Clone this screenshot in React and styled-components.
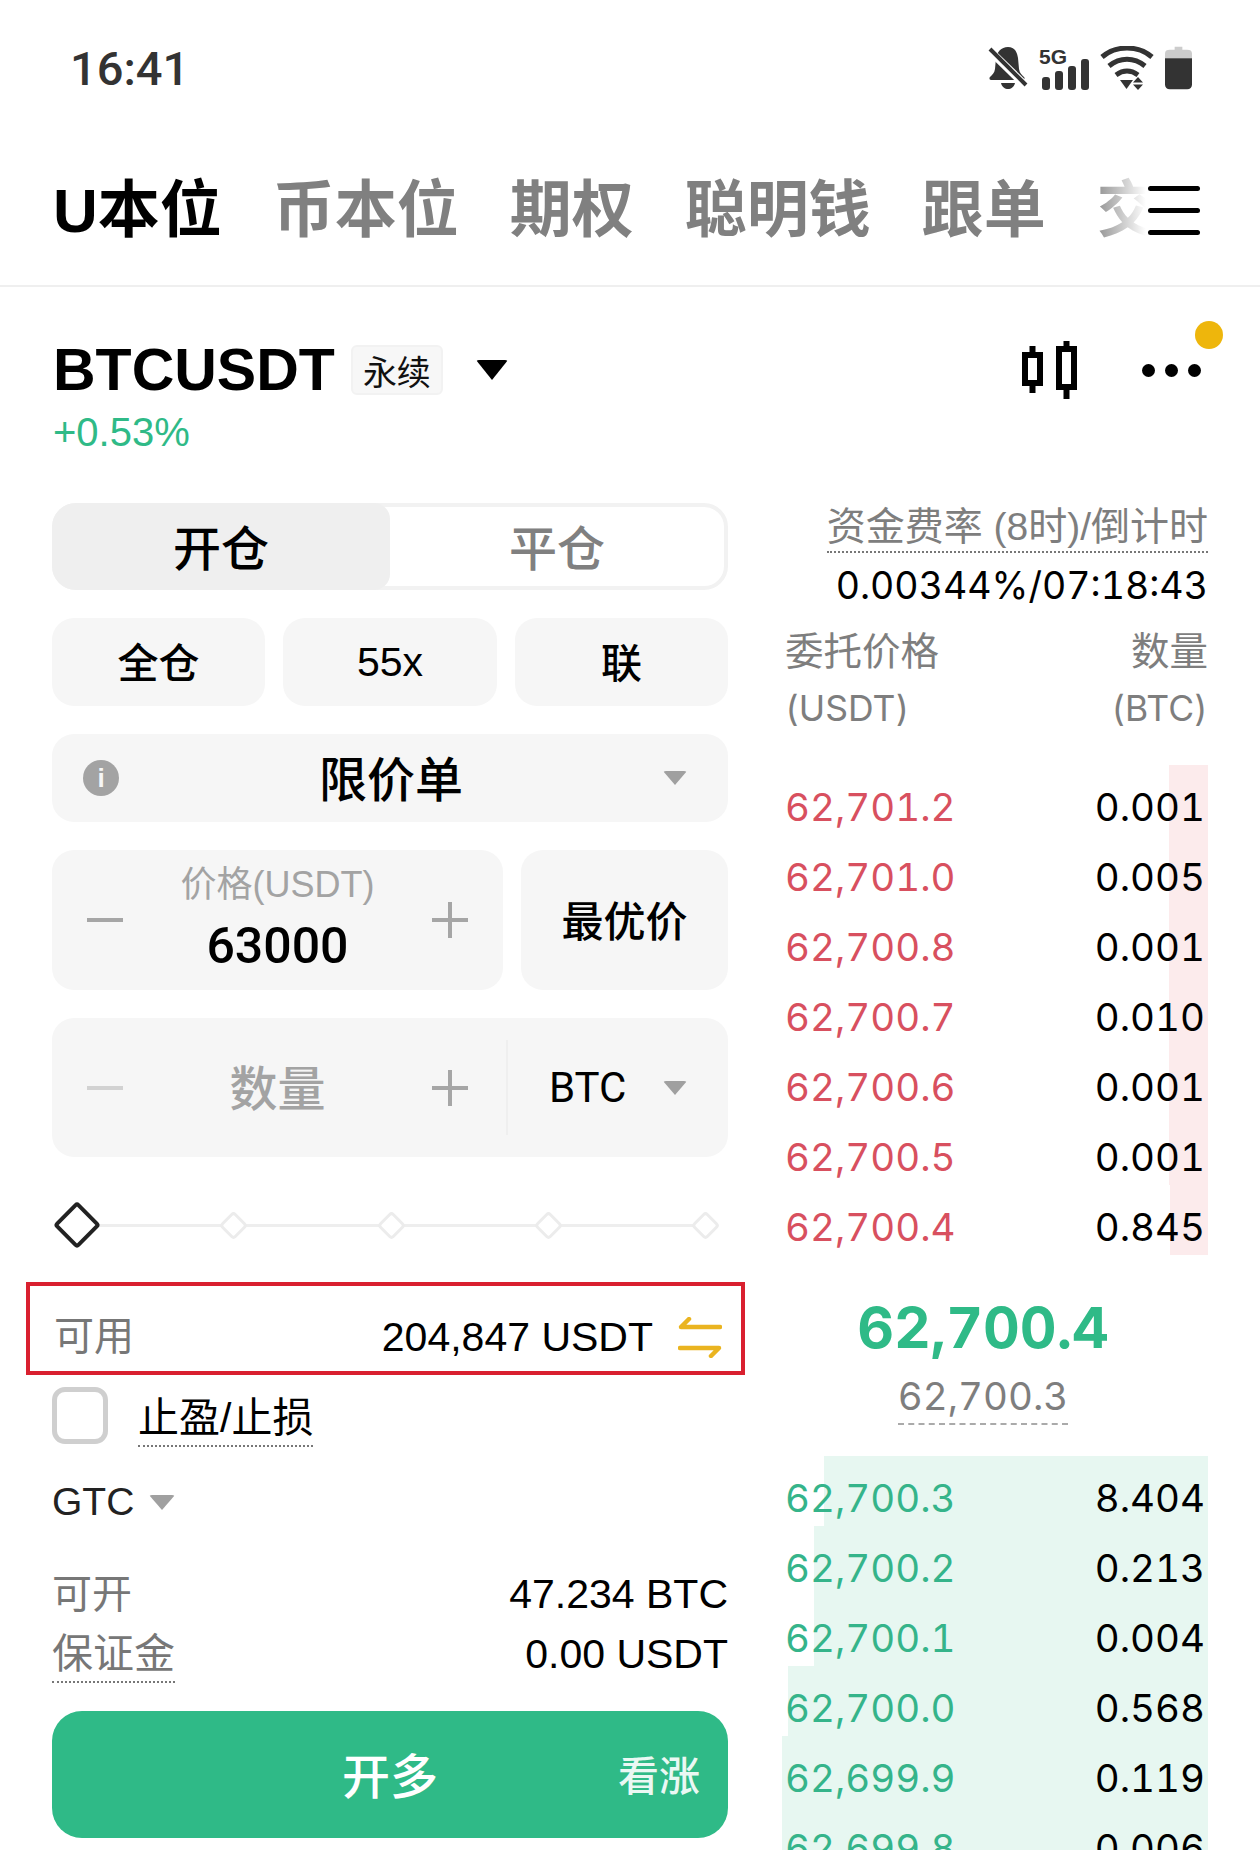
import React from 'react';
import styled, { createGlobalStyle } from 'styled-components';

const GlobalStyle = createGlobalStyle`
  html, body {
    margin: 0;
    padding: 0;
    background: #fff;
  }
  body {
    font-family: "Inter", "Noto Sans CJK SC", sans-serif;
    color: #000;
  }
  * {
    box-sizing: border-box;
  }
`;

const cjk = '"Liberation Sans", "Noto Sans CJK SC", sans-serif';
const green = '#2fba87';
const red = '#d8505f';

const asks = [
  ['62,701.2', '0.001', 39],
  ['62,701.0', '0.005', 39],
  ['62,700.8', '0.001', 39],
  ['62,700.7', '0.010', 39],
  ['62,700.6', '0.001', 39],
  ['62,700.5', '0.001', 39],
  ['62,700.4', '0.845', 38],
];

const bids = [
  ['62,700.3', '8.404', 384],
  ['62,700.2', '0.213', 394],
  ['62,700.1', '0.004', 394],
  ['62,700.0', '0.568', 420],
  ['62,699.9', '0.119', 426],
  ['62,699.8', '0.006', 426],
];

const tabs = ['币本位', '期权', '聪明钱', '跟单', '交易'];

const BellOff = () => (
  <svg width="40" height="44" viewBox="0 0 40 44">
    <path d="M20 1c-7 0-11 5-12 11l-1 11c-.5 4-3 6-5 8-1 1-.5 3 1 3h32c1.500 0 2-2 1-3-2-2-4.500-4-5-8l-1-11C29 6 27 1 20 1z" fill="#333" />
    <path d="M13 37h14c-1 4-4 6-7 6s-6-2-7-6z" fill="#333" />
    <path d="M1 4l36 35" stroke="#fff" strokeWidth="8" />
    <path d="M2 3l36 36" stroke="#333" strokeWidth="4" />
  </svg>
);

const Signal = () => (
  <svg width="50" height="44" viewBox="0 0 50 44">
    <rect x="3" y="31" width="8" height="13" rx="3" fill="#333" />
    <rect x="16" y="25" width="8" height="19" rx="3" fill="#333" />
    <rect x="29" y="20" width="8" height="24" rx="3" fill="#333" />
    <rect x="42" y="13" width="8" height="31" rx="3" fill="#333" />
    <text x="0" y="18" fontFamily="Liberation Sans, sans-serif" fontWeight="700" fontSize="21" fill="#333">5G</text>
  </svg>
);

const Wifi = () => (
  <svg width="54" height="44" viewBox="0 0 54 44" fill="none">
    <path d="M2 11C16 -1 38 -1 52 11" stroke="#333" strokeWidth="5" />
    <path d="M9 20c11-9 25-9 36 0" stroke="#333" strokeWidth="5" />
    <path d="M16 29c7-5 15-5 22 0" stroke="#333" strokeWidth="5" />
    <path d="M20 34h13l-6.500 9z" fill="#333" />
    <path d="M38 31l5 5.500h-10zM38 44l5-5.500h-10z" fill="#333" />
  </svg>
);

const Battery = () => (
  <svg width="27" height="44" viewBox="0 0 28 44">
    <path d="M10 3V0h8v3h5c3 0 5 1 5 4v5H0V7c0-3 2-4 5-4z" fill="#ccc" />
    <path d="M0 12h28v27c0 3-2 5-5 5H5c-3 0-5-2-5-5z" fill="#333" />
  </svg>
);

const CandleIcon = () => (
  <svg width="56" height="58" viewBox="0 0 56 58" fill="none" stroke="#000" strokeWidth="6">
    <rect x="3" y="14" width="15" height="28" />
    <path d="M10.500 5v9M10.500 42v10" />
    <rect x="37" y="8" width="15" height="38" />
    <path d="M44.500 0v8M44.500 46v12" />
  </svg>
);

const SwapIcon = () => (
  <svg width="44" height="41" viewBox="0 0 44 41" fill="none" stroke="#eab420" strokeWidth="4.500" strokeLinecap="round" strokeLinejoin="round">
    <path d="M42 10H3l8-8" />
    <path d="M2 31h39l-8 8" />
  </svg>
);

const Page = styled.div`
  width: 1260px;
  height: 1850px;
  overflow: hidden;
  background: #fff;
`;

const StatusBar = styled.div`
  height: 136px;
  padding: 0 68px 0 70px;
  display: flex;
  align-items: center;
  justify-content: space-between;
`;

const Time = styled.div`
  font-family: "Roboto", sans-serif;
  font-size: 47px;
  font-weight: 500;
  color: #333;
`;

const StatusIcons = styled.div`
  display: flex;
  align-items: center;
  gap: 11px;
`;

const TabBar = styled.div`
  position: relative;
  height: 151px;
  padding-left: 53px;
  display: flex;
  align-items: center;
  gap: 51px;
  overflow: hidden;
  border-bottom: 2px solid #efefef;
`;

const Tab = styled.div`
  flex: none;
  font-family: ${cjk};
  font-size: 62px;
  line-height: 72px;
  font-weight: 700;
  color: ${(p) => (p.$active ? '#000' : '#808080')};
`;

const MenuFade = styled.div`
  position: absolute;
  top: 0;
  right: 0;
  bottom: 0;
  width: 172px;
  padding-right: 60px;
  display: flex;
  flex-direction: column;
  align-items: flex-end;
  justify-content: center;
  gap: 17px;
  background: linear-gradient(to right, rgba(255, 255, 255, 0), #fff 58px);
`;

const MenuLine = styled.span`
  display: block;
  width: 52px;
  height: 5px;
  border-radius: 3px;
  background: #000;
`;

const Header = styled.div`
  position: relative;
  padding: 48px 59px 0 53px;
`;

const TitleRow = styled.div`
  height: 70px;
  display: flex;
  align-items: center;
`;

const Symbol = styled.div`
  font-family: "Liberation Sans", sans-serif;
  font-size: 59px;
  font-weight: 700;
`;

const Badge = styled.div`
  margin-left: 16px;
  width: 92px;
  height: 50px;
  border: 2px solid #f2f2f2;
  border-radius: 6px;
  background: #f7f7f7;
  display: flex;
  align-items: center;
  justify-content: center;
  font-family: ${cjk};
  font-size: 34px;
  color: #111;
`;

const Caret = styled.span`
  display: block;
  flex: none;
  width: 0;
  height: 0;
  border-left: ${(p) => p.$w / 2}px solid transparent;
  border-right: ${(p) => p.$w / 2}px solid transparent;
  border-top: ${(p) => p.$h}px solid ${(p) => p.$color || '#a0a0a0'};
  border-radius: 3px;
`;

const SymbolCaret = styled.div`
  margin-left: 33px;
`;

const HeaderIcons = styled.div`
  margin-left: auto;
  display: flex;
  align-items: center;
  gap: 64px;
`;

const Dots = styled.div`
  display: flex;
  gap: 10px;
`;

const Dot = styled.span`
  width: 13px;
  height: 13px;
  border-radius: 50%;
  background: #000;
`;

const Notice = styled.span`
  position: absolute;
  top: 34px;
  right: 37px;
  width: 28px;
  height: 28px;
  border-radius: 50%;
  background: #eeb60c;
`;

const Change = styled.div`
  height: 54px;
  font-family: "Liberation Sans", sans-serif;
  font-size: 40px;
  line-height: 54px;
  color: ${green};
`;

const Main = styled.div`
  margin-top: 44px;
  padding: 0 52px;
  display: grid;
  grid-template-columns: 676px 426px;
  justify-content: space-between;
`;

const LeftColumn = styled.div`
  display: flex;
  flex-direction: column;
`;

// CJK glyphs sit a little low in their line box here, this pulls them back to centre
const Lifted = styled.span`
  margin-bottom: 4px;
`;

const Segment = styled.div`
  height: 87px;
  border: 4px solid #f2f2f2;
  border-radius: 24px;
  display: grid;
  grid-template-columns: 334px 1fr;
  margin-bottom: 28px;
`;

const SegmentItem = styled.div`
  margin: ${(p) => (p.$active ? '-4px 0 -4px -4px' : '0')};
  border-radius: ${(p) => (p.$active ? '24px 16px 16px 24px' : '0')};
  background: ${(p) => (p.$active ? '#efefef' : 'transparent')};
  color: ${(p) => (p.$active ? '#000' : '#808080')};
  display: flex;
  align-items: center;
  justify-content: center;
  font-family: ${cjk};
  font-size: 48px;
  font-weight: 500;
`;

const ModeRow = styled.div`
  display: grid;
  grid-template-columns: 213px 214px 213px;
  justify-content: space-between;
  margin-bottom: 28px;
`;

const Field = styled.div`
  height: ${(p) => p.$h || 88}px;
  border-radius: 22px;
  background: #f6f6f6;
  display: flex;
  align-items: center;
  justify-content: center;
  font-family: ${cjk};
  font-size: ${(p) => p.$size || 41}px;
  font-weight: 500;
  color: #000;
`;

const OrderType = styled(Field)`
  justify-content: space-between;
  padding: 0 41px 0 31px;
  margin-bottom: 28px;
`;

const InfoDot = styled.span`
  width: 36px;
  height: 36px;
  border-radius: 50%;
  background: #a3a3a3;
  color: #f6f6f6;
  display: flex;
  align-items: center;
  justify-content: center;
  font-family: "Liberation Sans", sans-serif;
  font-size: 26px;
  font-weight: 700;
`;

const PriceRow = styled.div`
  display: grid;
  grid-template-columns: 451px 207px;
  justify-content: space-between;
  margin-bottom: 28px;
`;

const Stepper = styled(Field)`
  padding: 0 35px;
  justify-content: space-between;
`;

const Sign = styled.span`
  position: relative;
  flex: none;
  display: block;
  width: 36px;
  height: 36px;
  opacity: ${(p) => p.$dim ? 0.45 : 1};

  &::before {
    content: '';
    position: absolute;
    left: 0;
    right: 0;
    top: 16px;
    height: 4px;
    background: #a6a6a6;
  }

  &::after {
    content: '';
    display: ${(p) => (p.$plus ? 'block' : 'none')};
    position: absolute;
    top: 0;
    bottom: 0;
    left: 16px;
    width: 4px;
    background: #a6a6a6;
  }
`;

const PriceValue = styled.div`
  padding-bottom: 4px;
  display: flex;
  flex-direction: column;
  align-items: center;
`;

const PriceLabel = styled.div`
  font-size: 36px;
  font-weight: 400;
  line-height: 56px;
  color: #a3a3a3;
`;

const PriceText = styled.div`
  font-family: "Roboto", sans-serif;
  font-size: 50px;
  line-height: 66px;
  font-weight: 500;
`;

const QtyField = styled(Field)`
  padding: 0 35px;
  justify-content: flex-start;
  margin-bottom: 45px;
`;

const QtyInput = styled.div`
  flex: none;
  width: 381px;
  display: flex;
  align-items: center;
  justify-content: space-between;
`;

const QtyLabel = styled.div`
  font-size: 48px;
  color: #a3a3a3;
  margin-bottom: 6px;
`;

const UnitSelect = styled.div`
  flex: 1;
  height: 95px;
  margin-left: 38px;
  padding: 0 6px 0 41px;
  border-left: 2px solid #efefef;
  display: flex;
  align-items: center;
  justify-content: space-between;
  font-family: "Roboto", sans-serif;
  font-size: 42px;
  font-weight: 400;
`;

const Slider = styled.div`
  height: 46px;
  display: flex;
  align-items: center;
  justify-content: space-between;
  background: linear-gradient(#eee, #eee) 14px center / 640px 3px no-repeat;
  padding: 0 12px 0 14px;
  margin-bottom: 34px;
`;

const Diamond = styled.span`
  flex: none;
  display: block;
  width: ${(p) => (p.$active ? 34 : 21)}px;
  height: ${(p) => (p.$active ? 34 : 21)}px;
  border: ${(p) => (p.$active ? '4px solid #222' : '3px solid #ececec')};
  border-radius: 4px;
  background: #fff;
  transform: rotate(45deg);
  margin: 0 ${(p) => (p.$active ? -6.5 : 0)}px;
`;

const Available = styled.div`
  width: 719px;
  height: 93px;
  margin-left: -26px;
  padding: 18px 19px 0 24px;
  border: 4px solid #d9202f;
  display: flex;
  align-items: center;
  font-family: ${cjk};
  font-size: 41px;
`;

const MutedLabel = styled.span`
  color: #777;
  font-family: ${cjk};
  font-size: 40px;
  margin-bottom: ${(p) => p.$lift || 0}px;
`;

const AvailableValue = styled.span`
  margin-left: auto;
  margin-right: 25px;
`;

const CheckRow = styled.div`
  margin-top: 12px;
  display: flex;
  align-items: flex-start;
  gap: 30px;
`;

const CheckBox = styled.span`
  width: 56px;
  height: 57px;
  border: 5px solid #cfcfcf;
  border-radius: 13px;
`;

const DottedText = styled.span`
  display: inline-block;
  padding-top: ${(p) => p.$pad || 0}px;
  font-family: ${cjk};
  font-size: ${(p) => p.$size || 41}px;
  line-height: ${(p) => p.$line || 54}px;
  color: ${(p) => p.$color || '#000'};
  border-bottom: 2px dotted #777;
`;

const GtcRow = styled.div`
  margin-top: 28px;
  height: 54px;
  display: flex;
  align-items: center;
  gap: 15px;
  font-family: "Liberation Sans", sans-serif;
  font-size: 39px;
  color: #222;
`;

const Summary = styled.div`
  margin-top: 38px;
  display: flex;
  flex-direction: column;
  gap: 6px;
`;

const SummaryRow = styled.div`
  height: 54px;
  display: flex;
  align-items: flex-start;
  justify-content: space-between;
  font-family: "Liberation Sans", sans-serif;
  font-size: 41px;
  line-height: 54px;
`;

const OpenButton = styled.div`
  position: relative;
  margin-top: 30px;
  height: 127px;
  border-radius: 30px;
  background: ${green};
  color: #fff;
  display: flex;
  align-items: center;
  justify-content: center;
  font-family: ${cjk};
  font-size: 48px;
  font-weight: 500;
`;

const ButtonHint = styled.span`
  position: absolute;
  right: 28px;
  margin-bottom: 4px;
  font-size: 41px;
  opacity: 0.9;
`;

const RightColumn = styled.div`
  display: flex;
  flex-direction: column;
  font-variant-numeric: tabular-nums;
`;

const FundingBlock = styled.div`
  display: flex;
  flex-direction: column;
  align-items: flex-end;
`;

const FundingValue = styled.div`
  font-size: 37.500px;
  line-height: 62px;
  margin-top: 2px;
`;

const BookHead = styled.div`
  margin-top: 6px;
  padding-left: 3px;
  display: flex;
  justify-content: space-between;
  font-size: 35.500px;
  line-height: 56px;
  color: #7e7e7e;
`;

const HeadCell = styled.div`
  text-align: ${(p) => (p.$right ? 'right' : 'left')};
`;

const HeadTitle = styled.span`
  font-size: 38.500px;
`;

const Book = styled.div`
  margin-top: ${(p) => p.$top}px;
`;

const BookRow = styled.div`
  height: 70px;
  padding: 13px 3px 0 3px;
  display: flex;
  align-items: center;
  justify-content: space-between;
  font-size: 38.500px;
  background: linear-gradient(
    to left,
    ${(p) => p.$tint} ${(p) => p.$depth}px,
    transparent ${(p) => p.$depth}px
  );
`;

const BookPrice = styled.span`
  color: ${(p) => p.$color};
`;

const Mid = styled.div`
  margin-top: 32px;
  padding-right: 24px;
  display: flex;
  flex-direction: column;
  align-items: center;
`;

const MidPrice = styled.div`
  font-size: 57px;
  line-height: 82px;
  font-weight: 700;
  color: ${green};
`;

const IndexPrice = styled.div`
  font-size: 38.500px;
  line-height: 54px;
  color: #7e7e7e;
  border-bottom: 2px dashed #aaa;
`;

const App = () => {
  return (
    <Page>
      <GlobalStyle />
      <StatusBar>
        <Time>16:41</Time>
        <StatusIcons>
          <BellOff />
          <Signal />
          <Wifi />
          <Battery />
        </StatusIcons>
      </StatusBar>

      <TabBar>
        <Tab $active>U本位</Tab>
        {tabs.map((tab) => (
          <Tab key={tab}>{tab}</Tab>
        ))}
        <MenuFade>
          <MenuLine />
          <MenuLine />
          <MenuLine />
        </MenuFade>
      </TabBar>

      <Header>
        <TitleRow>
          <Symbol>BTCUSDT</Symbol>
          <Badge>永续</Badge>
          <SymbolCaret>
            <Caret $w={32} $h={20} $color="#000" />
          </SymbolCaret>
          <HeaderIcons>
            <CandleIcon />
            <Dots>
              <Dot />
              <Dot />
              <Dot />
            </Dots>
          </HeaderIcons>
        </TitleRow>
        <Notice />
        <Change>+0.53%</Change>
      </Header>

      <Main>
        <LeftColumn>
          <Segment>
            <SegmentItem $active><Lifted>开仓</Lifted></SegmentItem>
            <SegmentItem><Lifted>平仓</Lifted></SegmentItem>
          </Segment>

          <ModeRow>
            <Field><Lifted>全仓</Lifted></Field>
            <Field>55x</Field>
            <Field><Lifted>联</Lifted></Field>
          </ModeRow>

          <OrderType $size={48}>
            <InfoDot>i</InfoDot>
            <Lifted>限价单</Lifted>
            <Caret $w={24} $h={14} />
          </OrderType>

          <PriceRow>
            <Stepper $h={140}>
              <Sign />
              <PriceValue>
                <PriceLabel>价格(USDT)</PriceLabel>
                <PriceText>63000</PriceText>
              </PriceValue>
              <Sign $plus />
            </Stepper>
            <Field $h={140} $size={42}><Lifted>最优价</Lifted></Field>
          </PriceRow>

          <QtyField $h={139}>
            <QtyInput>
              <Sign $dim />
              <QtyLabel>数量</QtyLabel>
              <Sign $plus />
            </QtyInput>
            <UnitSelect>
              <span>BTC</span>
              <Caret $w={24} $h={14} />
            </UnitSelect>
          </QtyField>

          <Slider>
            <Diamond $active />
            <Diamond />
            <Diamond />
            <Diamond />
            <Diamond />
          </Slider>

          <Available>
            <MutedLabel $lift={10}>可用</MutedLabel>
            <AvailableValue>204,847 USDT</AvailableValue>
            <SwapIcon />
          </Available>

          <CheckRow>
            <CheckBox />
            <DottedText $pad={4}>止盈/止损</DottedText>
          </CheckRow>

          <GtcRow>
            <span>GTC</span>
            <Caret $w={26} $h={15} />
          </GtcRow>

          <Summary>
            <SummaryRow>
              <MutedLabel>可开</MutedLabel>
              <span>47.234 BTC</span>
            </SummaryRow>
            <SummaryRow>
              <DottedText $color="#777">保证金</DottedText>
              <span>0.00 USDT</span>
            </SummaryRow>
          </Summary>

          <OpenButton>
            <Lifted>开多</Lifted>
            <ButtonHint>看涨</ButtonHint>
          </OpenButton>
        </LeftColumn>

        <RightColumn>
          <FundingBlock>
            <DottedText $size={39} $line={48} $color="#7e7e7e">资金费率 (8时)/倒计时</DottedText>
            <FundingValue>0.00344%/07:18:43</FundingValue>
          </FundingBlock>

          <BookHead>
            <HeadCell><HeadTitle>委托价格</HeadTitle><br />(USDT)</HeadCell>
            <HeadCell $right><HeadTitle>数量</HeadTitle><br />(BTC)</HeadCell>
          </BookHead>

          <Book $top={28}>
            {asks.map(([price, qty, depth]) => (
              <BookRow key={price} $tint="#fcebec" $depth={depth}>
                <BookPrice $color={red}>{price}</BookPrice>
                <span>{qty}</span>
              </BookRow>
            ))}
          </Book>

          <Mid>
            <MidPrice>62,700.4</MidPrice>
            <IndexPrice>62,700.3</IndexPrice>
          </Mid>

          <Book $top={31}>
            {bids.map(([price, qty, depth]) => (
              <BookRow key={price} $tint="#e7f7f1" $depth={depth}>
                <BookPrice $color="#35b48a">{price}</BookPrice>
                <span>{qty}</span>
              </BookRow>
            ))}
          </Book>
        </RightColumn>
      </Main>
    </Page>
  );
};

export default App;
